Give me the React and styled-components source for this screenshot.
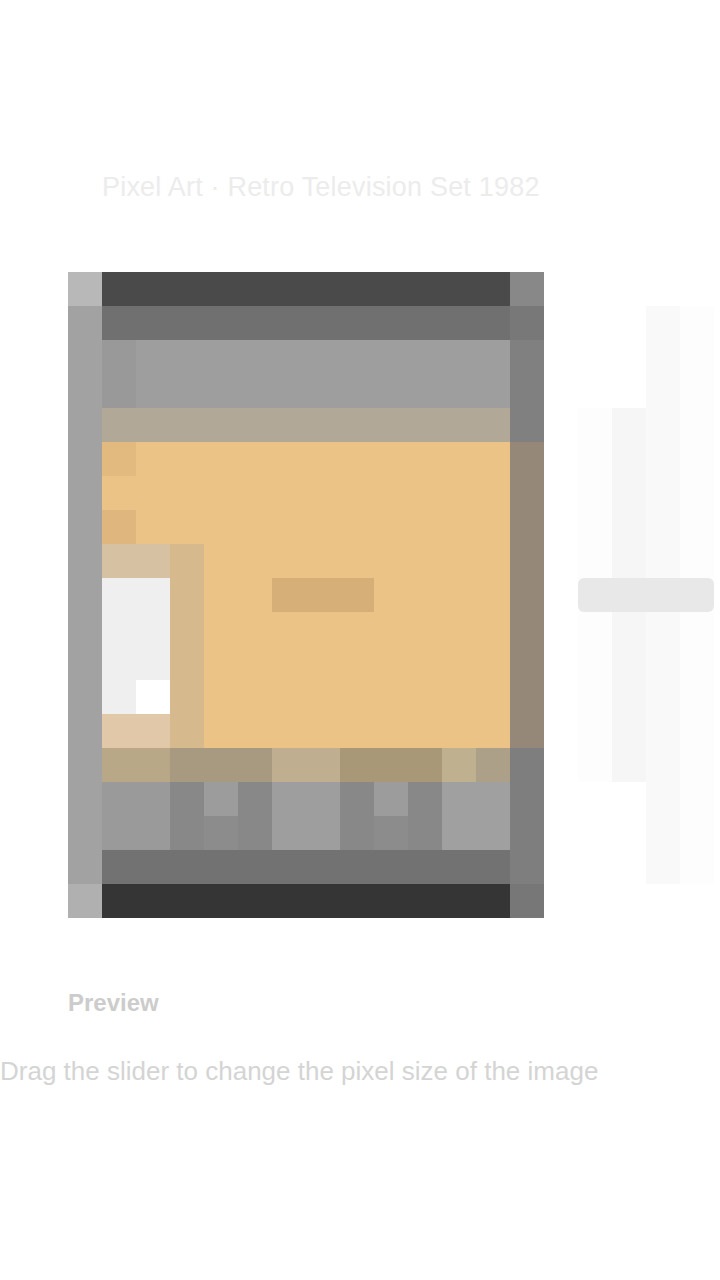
import React from "react";
import styled, { createGlobalStyle } from "styled-components";

const Global = createGlobalStyle`
  html, body { margin: 0; padding: 0; background: #ffffff; }
  body { font-family: "Liberation Sans", Arial, sans-serif; }
`;

const Page = styled.div`
  width: 720px;
  min-height: 1280px;
  box-sizing: border-box;
  padding-top: 170px;
  display: flex;
  flex-direction: column;
`;

const Title = styled.h1`
  margin: 0 0 0 102px;
  width: 442px;
  height: 34px;
  line-height: 34px;
  font-size: 27px;
  letter-spacing: 0.2px;
  font-weight: 400;
  color: #ececec;
  white-space: nowrap;
`;

const Stage = styled.div`
  margin-top: 68px;
  display: flex;
  align-items: flex-start;
  gap: 34px;
  padding-left: 68px;
`;

const Frame = styled.figure`
  margin: 0;
  width: 476px;
  height: 646px;
  display: block;
`;

const Slider = styled.div`
  position: relative;
  width: 136px;
  height: 578px;
  margin-top: 34px;
  display: flex;
  align-items: center;
`;

const Column = styled.div`
  width: 34px;
  height: ${(p) => (p.$full ? "578px" : "374px")};
  background: ${(p) => p.$tone};
`;

const Thumb = styled.div`
  position: absolute;
  left: 0;
  top: 272px;
  width: 136px;
  height: 34px;
  border-radius: 6px;
  background: #e8e8e8;
`;

const Caption = styled.div`
  margin: 68px 0 0 68px;
  width: 170px;
  height: 34px;
  line-height: 34px;
  font-size: 24px;
  font-weight: 700;
  color: #cccccc;
`;

const Description = styled.p`
  margin: 34px 0 0 0;
  width: 612px;
  height: 34px;
  line-height: 34px;
  font-size: 26px;
  color: #d4d4d4;
  white-space: nowrap;
`;

const cells = [
  [68, 272, 34, 34, "#b8b8b8"],
  [102, 272, 408, 34, "#4a4a4a"],
  [510, 272, 34, 34, "#888888"],
  [68, 306, 34, 578, "#a2a2a2"],
  [102, 306, 408, 34, "#707070"],
  [510, 306, 34, 34, "#787878"],
  [102, 340, 408, 68, "#9e9e9e"],
  [102, 340, 34, 68, "#999999"],
  [510, 340, 34, 102, "#808080"],
  [102, 408, 408, 34, "#b2a898"],
  [510, 442, 34, 306, "#958878"],
  [102, 442, 408, 306, "#ebc386"],
  [102, 442, 34, 34, "#e2b97f"],
  [102, 510, 34, 34, "#dfb67e"],
  [102, 544, 102, 34, "#d6c2a2"],
  [170, 544, 34, 204, "#d6b98c"],
  [102, 578, 68, 136, "#efefef"],
  [136, 680, 34, 34, "#ffffff"],
  [102, 714, 68, 34, "#e0c8a8"],
  [272, 578, 102, 34, "#d5ae78"],
  [102, 748, 68, 34, "#b8a888"],
  [170, 748, 102, 34, "#a89a80"],
  [272, 748, 68, 34, "#bfae90"],
  [340, 748, 102, 34, "#a89878"],
  [442, 748, 34, 34, "#bfb090"],
  [476, 748, 34, 34, "#aca088"],
  [510, 748, 34, 136, "#7e7e7e"],
  [102, 782, 68, 68, "#9a9a9a"],
  [170, 782, 34, 68, "#888888"],
  [204, 782, 34, 34, "#9c9c9c"],
  [204, 816, 34, 34, "#8c8c8c"],
  [238, 782, 34, 68, "#888888"],
  [272, 782, 68, 68, "#9e9e9e"],
  [340, 782, 34, 68, "#888888"],
  [374, 782, 34, 34, "#9c9c9c"],
  [374, 816, 34, 34, "#8c8c8c"],
  [408, 782, 34, 68, "#888888"],
  [442, 782, 68, 68, "#a0a0a0"],
  [102, 850, 408, 34, "#727272"],
  [68, 884, 34, 34, "#b0b0b0"],
  [102, 884, 408, 34, "#353535"],
  [510, 884, 34, 34, "#777777"],
];

function PixelPicture() {
  return (
    <svg width="476" height="646" viewBox="68 272 476 646" shapeRendering="crispEdges">
      {cells.map(([x, y, w, h, c], i) => (
        <rect key={i} x={x} y={y} width={w} height={h} fill={c} />
      ))}
    </svg>
  );
}

export default function App() {
  return (
    <>
      <Global />
      <Page>
        <Title>Pixel Art · Retro Television Set 1982</Title>
        <Stage>
          <Frame>
            <PixelPicture />
          </Frame>
          <Slider>
            <Column $tone="#fdfdfd" />
            <Column $tone="#f6f6f6" />
            <Column $tone="#f9f9f9" $full />
            <Column $tone="#fdfdfd" $full />
            <Thumb />
          </Slider>
        </Stage>
        <Caption>Preview</Caption>
        <Description>Drag the slider to change the pixel size of the image</Description>
      </Page>
    </>
  );
}
